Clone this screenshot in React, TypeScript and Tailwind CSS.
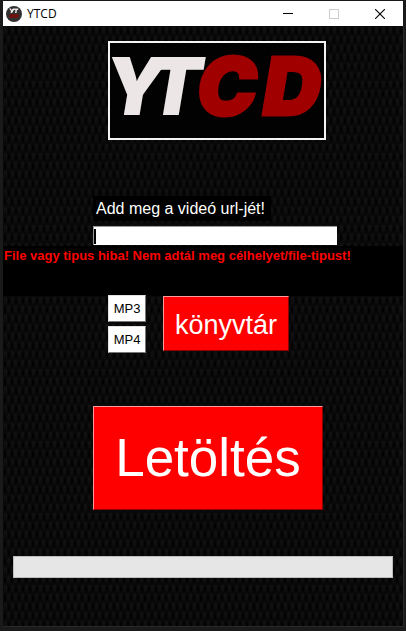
import React from "react";

const ui = "font-['Liberation_Sans',Arial,sans-serif]";

function AppIcon() {
  return (
    <svg viewBox="0 0 16 16" className="h-4 w-4" aria-hidden="true">
      <circle cx="8" cy="8" r="8" fill="#303030" />
      <path d="M3 2.500h2l.5 1.500L7 2.500h5.500L12 4h-1l-.5 3H9l.5-3H8L6 7H4.500L5 5z" fill="#ece6e6" />
      <path d="M3.500 8h9.500v2l-1 2H3l.5-4z" fill="#6b1414" />
    </svg>
  );
}

function TitleBar() {
  const button = "flex h-full w-[46px] items-center justify-center";
  return (
    <header className="flex h-[25px] items-center bg-white pl-[3px] text-black">
      <AppIcon />
      <h1 className="ml-[5px] font-['Open_Sans','Noto_Sans',sans-serif] text-[12px] leading-4">YTCD</h1>
      <div className="ml-auto flex h-full">
        <button type="button" aria-label="Minimize" className={button}>
          <svg width="10" height="10" shapeRendering="crispEdges"><path d="M0 4.500h10" stroke="#000" /></svg>
        </button>
        <button type="button" aria-label="Maximize" disabled className={button}>
          <svg width="10" height="10" shapeRendering="crispEdges"><path d="M.5.5h9v9h-9z" fill="none" stroke="#ccc" /></svg>
        </button>
        <button type="button" aria-label="Close" className={button}>
          <svg width="10" height="10"><path d="M0 0l10 10M10 0L0 10" stroke="#000" strokeWidth="1.1" /></svg>
        </button>
      </div>
    </header>
  );
}

function Backdrop() {
  return (
    <svg className="absolute inset-0 h-full w-full" aria-hidden="true">
      <defs>
        <linearGradient id="bump" x1="0" y1="0" x2="0" y2="1">
          <stop offset="0" stopColor="#121212" />
          <stop offset="1" stopColor="#0c0c0c" />
        </linearGradient>
        <pattern id="weave" width="7" height="18" patternUnits="userSpaceOnUse">
          <rect width="7" height="18" fill="#090909" />
          <rect x="1" y="1" width="3" height="7" rx="1" fill="url(#bump)" />
          <rect x="5" y="2" width="2" height="6" rx="1" fill="#030303" />
          <rect x="4" y="10" width="3" height="7" rx="1" fill="url(#bump)" />
          <rect x="1" y="11" width="2" height="6" rx="1" fill="#030303" />
        </pattern>
      </defs>
      <rect width="100%" height="100%" fill="url(#weave)" />
    </svg>
  );
}

function Logo() {
  return (
    <div className="ml-[105px] h-[99px] w-[218px] border-2 border-[#f4f4f4] bg-[#020202]">
      <svg viewBox="0 0 214 95" className="h-full w-full overflow-visible font-['Inter',sans-serif] text-[80px] font-black italic" role="img" aria-label="YTCD">
        <text y="72" fill="#ece6e6"><tspan x="-6">Y</tspan><tspan x="37">T</tspan></text>
        <text y="72" fill="#a00000" stroke="#a00000" strokeWidth="3"><tspan x="87">C</tspan><tspan x="153">D</tspan></text>
      </svg>
    </div>
  );
}

export default function App() {
  const raised = "border border-t-[#ff9a9a] border-l-[#ff9a9a] border-r-[#8c0000] border-b-[#8c0000] bg-[#ff0000] text-white";
  const format = "h-[27px] w-[38px] border border-t-[#e3e3e3] border-l-[#e3e3e3] border-r-[#777] border-b-[#777] bg-white pt-px text-[13px] text-black";
  return (
    <div className={`flex min-h-screen flex-col bg-[#1a1a1a] px-[3px] pt-px pb-1 ${ui}`}>
      <TitleBar />
      <main className="relative -mr-px flex-1 border-r border-b border-[#292929]">
        <Backdrop />
        <form className="relative pt-[15px] pb-6" onSubmit={(e) => e.preventDefault()}>
          <Logo />
          <div className="mt-14 ml-[90px]">
            <label htmlFor="url" className="block h-[25px] w-[178px] bg-black pl-[3px] text-[16px] leading-[25px] text-white">
              Add meg a videó url-jét!
            </label>
            <div className="mt-[5px] flex h-[19px] w-[244px] items-center border-t border-l border-[#999] bg-white">
              <span className="h-[15px] w-[2px] bg-black" />
              <input id="url" type="text" className="h-full min-w-0 flex-1 bg-white px-1 text-[13px] text-black outline-none" />
            </div>
          </div>
          <p role="alert" className="mt-px h-[50px] bg-black pl-px text-[13px] leading-[19px] font-bold text-[#ff0000]">
            File vagy tipus hiba! Nem adtál meg célhelyet/file-tipust!
          </p>
          <div className="-mt-px ml-[105px] flex items-start gap-[17px]">
            <div className="flex flex-col gap-1">
              <button type="button" className={format}>MP3</button>
              <button type="button" className={format}>MP4</button>
            </div>
            <button type="button" className={`mt-px h-[55px] w-[126px] pt-1 text-[27px] ${raised}`}>könyvtár</button>
          </div>
          <button type="submit" className={`mt-[53px] ml-[90px] block h-[104px] w-[230px] text-[53px] ${raised}`}>
            Letöltés
          </button>
          <div className="mt-[46px] px-[10px]">
            <progress
              aria-label="Letöltés"
              value={0}
              max={100}
              className="block h-[22px] w-full appearance-none border border-[#bcbcbc] bg-[#e6e6e6] [&::-webkit-progress-bar]:bg-[#e6e6e6] [&::-webkit-progress-value]:bg-[#06b025]"
            />
          </div>
        </form>
      </main>
    </div>
  );
}
